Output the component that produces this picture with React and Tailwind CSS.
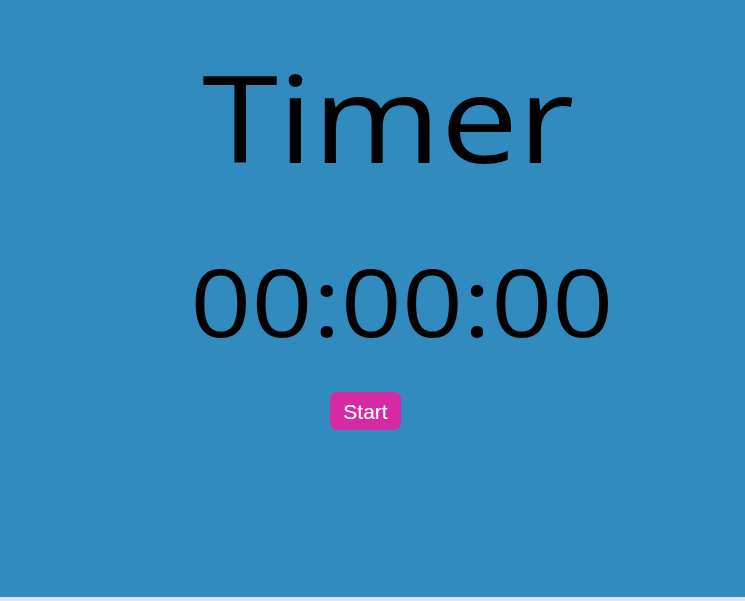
import React, { useState } from "react";

export default function App() {
  const [running, setRunning] = useState(false);

  return (
    <div className="h-[601px] bg-[#dce6f6]">
      <div className="h-[597px] bg-[#318bbf] flex flex-col items-center text-black" style={{ fontFamily: "'Open Sans', sans-serif" }}>
        <h1 className="mt-[41px] ml-[32px] text-[121px] leading-[150px] scale-x-[1.14]">Timer</h1>
        <div className="mt-[50px] ml-[58px] text-[94px] leading-[120px] scale-x-[1.138]">00:00:00</div>
        <button
          onClick={() => setRunning(!running)}
          className="mt-[31px] mr-[14px] w-[71px] h-[38px] rounded-[7px] bg-[#d62aa5] text-white text-[21px] leading-none"
          style={{ fontFamily: "'Liberation Sans', Arial, sans-serif" }}
        >
          {running ? "Stop" : "Start"}
        </button>
      </div>
    </div>
  );
}
